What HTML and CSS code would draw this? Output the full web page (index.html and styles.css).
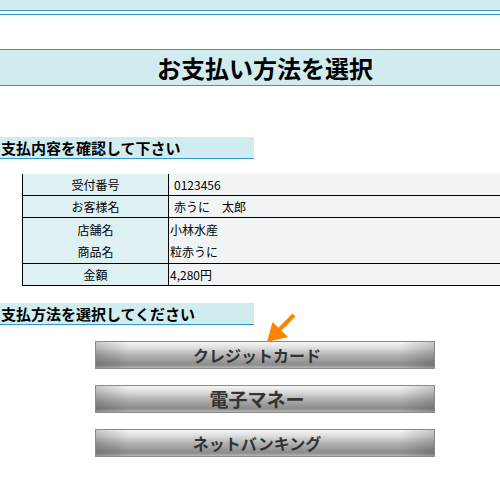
FILE: index.html
```html
<!DOCTYPE html>
<html lang="ja">
<head>
<meta charset="utf-8">
<title>お支払い方法を選択</title>
<link rel="stylesheet" href="styles.css">
</head>
<body>
<div class="page">
  <div class="topbar"></div>
  <div class="topline"></div>
  <h1 class="title">お支払い方法を選択</h1>

  <h2 class="section">支払内容を確認して下さい</h2>
  <table class="info">
    <tr><th>受付番号</th><td class="pad">0123456</td></tr>
    <tr><th>お客様名</th><td class="pad">赤うに　太郎</td></tr>
    <tr class="tall"><th>店舗名<br>商品名</th><td>小林水産<br>粒赤うに</td></tr>
    <tr><th>金額</th><td>4,280円</td></tr>
  </table>

  <h2 class="section section-2">支払方法を選択してください</h2>
  <div class="methods">
    <button class="method">クレジットカード</button>
    <button class="method method-big">電子マネー</button>
    <button class="method">ネットバンキング</button>
  </div>

  <svg class="arrow" width="30" height="32" viewBox="0 0 30 32">
    <line x1="27" y1="2" x2="13" y2="16" stroke="#ff8200" stroke-width="4"/>
    <polygon points="0,29 5.5,9 21,24" fill="#ff8200"/>
  </svg>
</div>
</body>
</html>
```

FILE: styles.css
```css
html, body {
  margin: 0;
  padding: 0;
  background: #ffffff;
}

.page {
  position: relative;
  width: 500px;
  font-family: "Noto Sans CJK JP", "Liberation Sans", sans-serif;
  color: #000;
}

.topbar {
  height: 10px;
  background: #d0ecef;
  border-bottom: 1px solid #3399cc;
}

.topline {
  margin-top: 3px;
  border-top: 1px solid #3399cc;
}

.title {
  margin: 34px 0 0;
  height: 35px;
  line-height: 35px;
  padding-left: 30px;
  background: #d0ecef;
  border-top: 1px solid #3399cc;
  border-bottom: 1px solid #3399cc;
  text-align: center;
  font-size: 24px;
  font-weight: bold;
}

.section {
  margin: 51px 0 0;
  width: 253px;
  height: 21px;
  line-height: 21px;
  background: #d0ecef;
  border-bottom: 1px solid #3399cc;
  font-size: 15px;
  font-weight: bold;
  padding-left: 1px;
}

.section-2 {
  margin-top: 17px;
}

.info {
  margin: 15px 0 0 22px;
  width: 478px;
  border-collapse: collapse;
  font-size: 12px;
}

.info th,
.info td {
  padding: 0;
  height: 21px;
  line-height: 21px;
  border-bottom: 1px solid #000;
  font-weight: normal;
  vertical-align: middle;
}

.info th {
  width: 145px;
  background: #dff0f3;
  border-left: 1px solid #000;
  border-right: 1px solid #000;
  text-align: center;
}

.info td {
  background: #f1f4f5;
  text-align: left;
  padding-left: 1px;
}

.info td.pad {
  padding-left: 5px;
}

.info .tall th,
.info .tall td {
  height: 45px;
  line-height: 22px;
}

.methods {
  margin: 16px 0 0 95px;
  display: flex;
  flex-direction: column;
  gap: 16px;
  width: 340px;
}

.method {
  display: block;
  width: 340px;
  height: 28px;
  margin: 0;
  padding: 0 16px 0 0;
  border: 1px solid #8a8a8a;
  background:
    linear-gradient(to right, rgba(0,0,0,0.18), rgba(0,0,0,0) 10%, rgba(0,0,0,0) 90%, rgba(0,0,0,0.18)),
    linear-gradient(to bottom, #f6f6f6 0%, #dedede 22%, #b4b4b4 50%, #949494 78%, #8c8c8c 88%, #b8b8b8 100%);
  font-family: "Noto Sans CJK JP", "Liberation Sans", sans-serif;
  font-size: 16px;
  font-weight: bold;
  color: #333333;
  line-height: 26px;
  text-align: center;
}

.method-big {
  font-size: 19px;
}

.arrow {
  position: absolute;
  left: 267px;
  top: 313px;
}
```
